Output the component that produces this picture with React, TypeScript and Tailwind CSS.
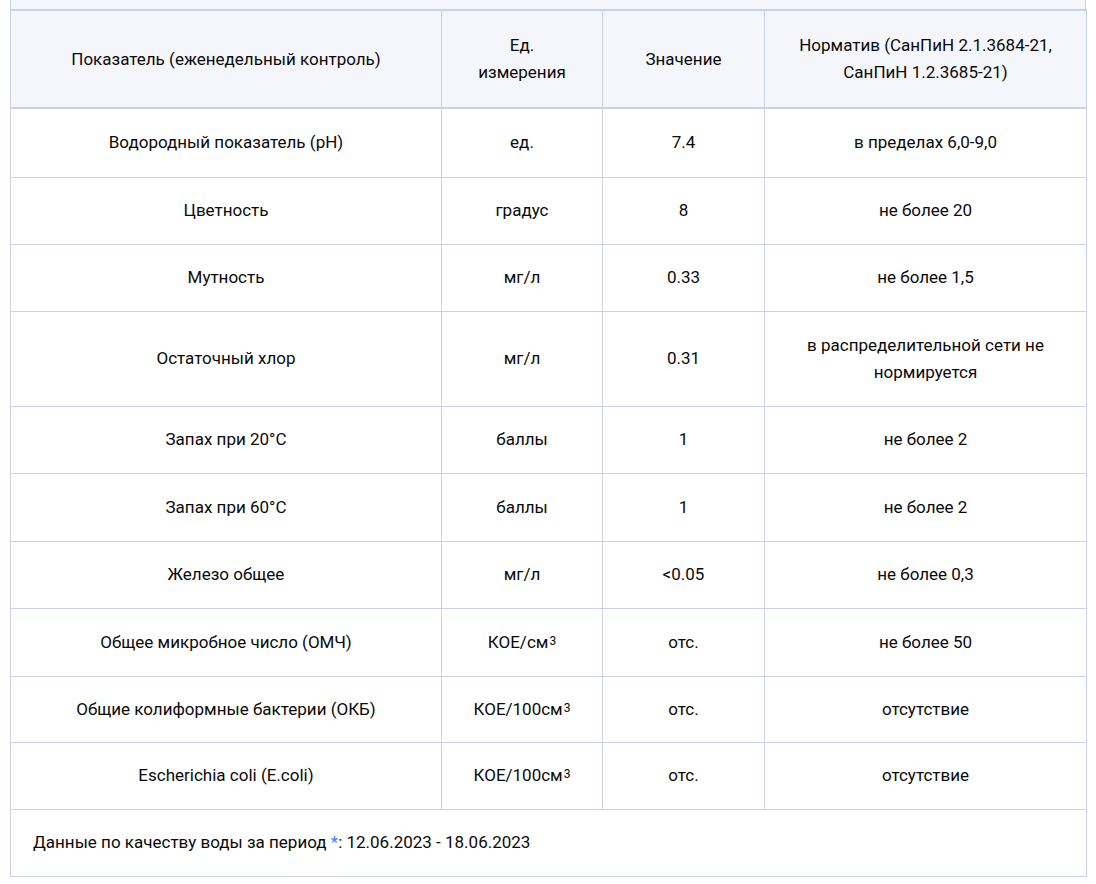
import React from 'react';

interface Row {
  name: string;
  unit: React.ReactNode;
  value: string;
  norm: React.ReactNode;
  h: string;
}

const cm3 = (prefix: string) => (
  <>
    {prefix}
    <sup className="text-[12px] relative -top-[3px] ml-[1px]">3</sup>
  </>
);

const rows: Row[] = [
  { name: 'Водородный показатель (pH)', unit: 'ед.', value: '7.4', norm: 'в пределах 6,0-9,0', h: 'h-[69px]' },
  { name: 'Цветность', unit: 'градус', value: '8', norm: 'не более 20', h: 'h-[67px]' },
  { name: 'Мутность', unit: 'мг/л', value: '0.33', norm: 'не более 1,5', h: 'h-[67px]' },
  {
    name: 'Остаточный хлор',
    unit: 'мг/л',
    value: '0.31',
    norm: (
      <>
        в распределительной сети не
        <br />
        нормируется
      </>
    ),
    h: 'h-[95px]',
  },
  { name: 'Запах при 20°С', unit: 'баллы', value: '1', norm: 'не более 2', h: 'h-[67px]' },
  { name: 'Запах при 60°С', unit: 'баллы', value: '1', norm: 'не более 2', h: 'h-[68px]' },
  { name: 'Железо общее', unit: 'мг/л', value: '<0.05', norm: 'не более 0,3', h: 'h-[67px]' },
  { name: 'Общее микробное число (ОМЧ)', unit: cm3('КОЕ/см'), value: 'отс.', norm: 'не более 50', h: 'h-[68px]' },
  { name: 'Общие колиформные бактерии (ОКБ)', unit: cm3('КОЕ/100см'), value: 'отс.', norm: 'отсутствие', h: 'h-[66px]' },
  { name: 'Escherichia coli (E.coli)', unit: cm3('КОЕ/100см'), value: 'отс.', norm: 'отсутствие', h: 'h-[67px]' },
];

const cell = 'border border-[#c8d2ea] text-center align-middle px-3 py-0';
const head = 'border border-[#c8d2ea] border-t-2 border-b-2 text-center align-middle px-3 py-0 font-normal';

export default function App() {
  return (
    <div
      className="min-h-[884px] bg-white px-[10px] text-[17px] leading-[27px] text-[#0a0a0a]"
      style={{ fontFamily: 'Roboto, "Liberation Sans", sans-serif' }}
    >
      <div className="h-[9px] bg-[#f4f6fc] border-x border-[#c8d2ea] w-[1076px]" />
      <table className="border-collapse w-[1076px] table-fixed">
        <colgroup>
          <col className="w-[431px]" />
          <col className="w-[161px]" />
          <col className="w-[162px]" />
          <col className="w-[322px]" />
        </colgroup>
        <thead>
          <tr className="bg-[#f4f6fc] h-[98px]">
            <th className={head}>Показатель (еженедельный контроль)</th>
            <th className={head}>
              Ед.
              <br />
              измерения
            </th>
            <th className={head}>Значение</th>
            <th className={head}>
              Норматив (СанПиН 2.1.3684-21,
              <br />
              СанПиН 1.2.3685-21)
            </th>
          </tr>
        </thead>
        <tbody>
          {rows.map((r) => (
            <tr key={r.name} className={r.h}>
              <td className={cell}>{r.name}</td>
              <td className={cell}>{r.unit}</td>
              <td className={cell}>{r.value}</td>
              <td className={cell}>{r.norm}</td>
            </tr>
          ))}
          <tr className="h-[67px]">
            <td colSpan={4} className="border border-[#c8d2ea] pl-[22px] pr-3 py-0 text-left">
              Данные по качеству воды за период <span className="text-[#3b82f6]">*</span>: 12.06.2023 - 18.06.2023
            </td>
          </tr>
        </tbody>
      </table>
    </div>
  );
}
